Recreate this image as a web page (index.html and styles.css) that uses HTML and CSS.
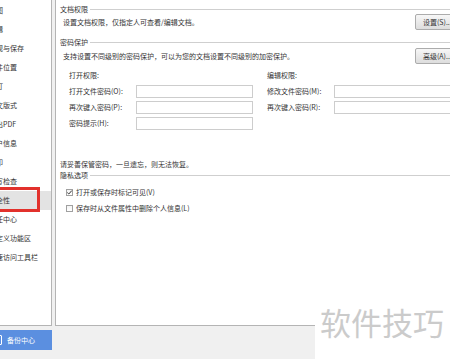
FILE: index.html
```html
<!DOCTYPE html>
<html lang="zh-CN">

<head>
  <meta charset="UTF-8">
  <meta name="viewport" content="width=device-width, initial-scale=1.0">
  <title>选项 - 安全性</title>
  <link rel="stylesheet" href="styles.css">
</head>

<body>
  <div class="window">
    <div class="side">
      <ul class="nav">
        <li>视图</li>
        <li>编辑</li>
        <li>常规与保存</li>
        <li>文件位置</li>
        <li>修订</li>
        <li>中文版式</li>
        <li>输出PDF</li>
        <li>用户信息</li>
        <li>打印</li>
        <li>拼写检查</li>
        <li class="active">安全性<span class="mark"></span></li>
        <li>信任中心</li>
        <li>自定义功能区</li>
        <li>快速访问工具栏</li>
      </ul>
      <button class="backup"><i class="backup-icon"></i>备份中心</button>
    </div>

    <div class="main">
      <div class="group-title">文档权限</div>
      <div class="group-row">
        <span class="desc">设置文档权限，仅指定人可查看/编辑文档。</span>
        <button class="btn">设置(S)...</button>
      </div>

      <div class="group-title title-pw">密码保护</div>
      <div class="group-row row-pw">
        <span class="desc">支持设置不同级别的密码保护，可以为您的文档设置不同级别的加密保护。</span>
        <button class="btn">高级(A)...</button>
      </div>

      <div class="pw">
        <span class="label">打开权限:</span>
        <span></span>
        <span class="label">编辑权限:</span>
        <span></span>

        <span class="label">打开文件密码(O):</span>
        <input class="field" type="password">
        <span class="label">修改文件密码(M):</span>
        <input class="field" type="password">

        <span class="label">再次键入密码(P):</span>
        <input class="field" type="password">
        <span class="label">再次键入密码(R):</span>
        <input class="field" type="password">

        <span class="label">密码提示(H):</span>
        <input class="field" type="text">
      </div>

      <div class="note">请妥善保管密码，一旦遗忘，则无法恢复。</div>

      <div class="group-title title-privacy">隐私选项</div>
      <label class="check check-first">
        <span class="box checked">
          <svg viewBox="0 0 7 7" width="7" height="7"><path d="M1.3 3.6 L2.8 5 L5.8 1.6" fill="none" stroke="#333" stroke-width="1"/></svg>
        </span>
        打开或保存时标记可见(V)
      </label>
      <label class="check">
        <span class="box"></span>
        保存时从文件属性中删除个人信息(L)
      </label>
    </div>
  </div>

  <div class="watermark">软件技巧</div>
</body>

</html>
```

FILE: styles.css
```css
html, body {
  margin: 0;
  padding: 0;
}

body {
  position: relative;
  width: 450px;
  height: 359px;
  overflow: hidden;
  background: #f0f0f0;
  font-family: "Noto Sans CJK SC", "Noto Sans", sans-serif;
  font-size: 7px;
  color: #333;
}

.window {
  display: flex;
  align-items: flex-start;
}

/* left list */
.side {
  width: 65px;
  margin-left: -13px;
  flex-shrink: 0;
}

.nav {
  list-style: none;
  margin: 0;
  padding: 1px 0 0;
  height: 326px;
  box-sizing: border-box;
  background: #fff;
  border: 1px solid #b4b4b4;
  border-top: none;
}

.nav > li {
  position: relative;
  height: 19px;
  line-height: 19px;
  padding-left: 1px;
  white-space: nowrap;
}

.nav > li.active {
  background: #e3e3e3;
}

.nav .mark {
  position: absolute;
  left: -2px;
  top: -4px;
  width: 54px;
  height: 25px;
  box-sizing: border-box;
  border: 3px solid #e2312c;
}

.backup {
  display: flex;
  align-items: center;
  width: 65px;
  height: 20px;
  margin-top: 4px;
  padding: 0 0 0 7px;
  border: none;
  background: #5b8fe0;
  color: #fff;
  font: inherit;
  font-size: 7px;
}

.backup-icon {
  width: 6px;
  height: 8px;
  margin-right: 5px;
  border: 1px solid #fff;
  border-radius: 1px;
}

/* right panel */
.main {
  width: 420px;
  height: 326px;
  margin-left: 3px;
  flex-shrink: 0;
  box-sizing: border-box;
  padding: 4px 4px 0;
  background: #fff;
  border: 1px solid #b4b4b4;
  border-top: none;
}

.group-title {
  display: flex;
  align-items: center;
  height: 10px;
  line-height: 10px;
  white-space: nowrap;
}

.group-title::after {
  content: '';
  flex: 1;
  height: 1px;
  margin-left: 2px;
  background: #cfcfcf;
}

.title-pw {
  margin-top: 7px;
}

.title-privacy {
  margin-top: 1px;
}

.group-row {
  display: flex;
  align-items: center;
  height: 16px;
}

.row-pw {
  margin-top: 1px;
}

.desc {
  padding-left: 3px;
  white-space: nowrap;
}

.btn {
  width: 55px;
  height: 16px;
  margin-left: auto;
  padding: 0 0 0 7px;
  text-align: left;
  font: inherit;
  color: #333;
  border: 1px solid #acacac;
  border-radius: 2px;
  background: linear-gradient(#f7f7f7, #dddddd);
}

.pw {
  display: grid;
  grid-template-columns: 67px 131px 67px 117px;
  grid-auto-rows: 13px;
  row-gap: 3px;
  margin-top: 5px;
  padding-left: 9px;
}

.label {
  line-height: 13px;
  white-space: nowrap;
}

.field {
  width: 117px;
  height: 13px;
  margin: 0;
  padding: 0;
  box-sizing: border-box;
  border: 1px solid #cdcdcd;
  background: #fff;
}

.note {
  height: 10px;
  line-height: 10px;
  margin-top: 29px;
}

.check {
  display: flex;
  align-items: center;
  height: 12px;
  margin-top: 4px;
  padding-left: 6px;
  white-space: nowrap;
}

.check-first {
  margin-top: 6px;
}

.box {
  display: flex;
  width: 7px;
  height: 7px;
  margin-right: 3px;
  box-sizing: border-box;
  border: 1px solid #a0a0a0;
  background: linear-gradient(#f4f4f4, #ffffff);
}

.box svg {
  margin: -1px;
}

/* watermark box over the corner */
.watermark {
  position: absolute;
  left: 315px;
  top: 300px;
  right: 0;
  bottom: 0;
  padding: 6px 0 0 5px;
  background: #fff;
  color: #cbcbcb;
  font-size: 31px;
  line-height: 31px;
  white-space: nowrap;
}
```
